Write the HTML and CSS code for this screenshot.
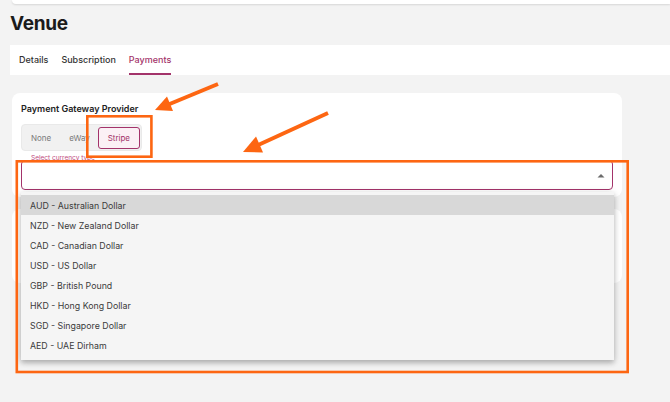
FILE: index.html
```html
<!DOCTYPE html>
<html>
<head>
<meta charset="utf-8">
<link rel="stylesheet" href="styles.css">
</head>
<body>
<div class="page">
  <div class="topbar"></div>
  <h1 class="title">Venue</h1>
  <nav class="tabs">
    <span class="tab">Details</span>
    <span class="tab">Subscription</span>
    <span class="tab active">Payments</span>
  </nav>
  <div class="content">
    <section class="card">
      <h2 class="card-title">Payment Gateway Provider</h2>
      <div class="segmented">
        <span class="seg seg-none">None</span>
        <span class="seg seg-eway">eWay</span>
        <span class="seg seg-active">Stripe</span>
      </div>
      <div class="select-wrap">
        <span class="float-label">Select currency type</span>
        <div class="select">
          <svg class="caret" width="8" height="5" viewBox="0 0 8 5"><path d="M0.5 4.5 L4 1 L7.5 4.5 Z" fill="#6b6b6b"/></svg>
        </div>
        <ul class="menu">
          <li class="item hl">AUD - Australian Dollar</li>
          <li class="item">NZD - New Zealand Dollar</li>
          <li class="item">CAD - Canadian Dollar</li>
          <li class="item">USD - US Dollar</li>
          <li class="item">GBP - British Pound</li>
          <li class="item">HKD - Hong Kong Dollar</li>
          <li class="item">SGD - Singapore Dollar</li>
          <li class="item">AED - UAE Dirham</li>
        </ul>
      </div>
    </section>
    <section class="card card2"></section>
  </div>
  <svg class="annot" width="670" height="402" viewBox="0 0 670 402">
    <rect x="87.3" y="116.3" width="64.1" height="40.4" fill="none" stroke="#fd6612" stroke-width="2.6"/>
    <rect x="16.8" y="161.3" width="610.9" height="210.7" fill="none" stroke="#fd6612" stroke-width="2.6"/>
    <line x1="218" y1="84" x2="166" y2="105.5" stroke="#fd6612" stroke-width="4" stroke-linecap="butt"/>
    <polygon points="155,110 173,111 167,96.5" fill="#fd6612"/>
    <line x1="328" y1="113" x2="256" y2="146" stroke="#fd6612" stroke-width="4" stroke-linecap="butt"/>
    <polygon points="243,152 263,152.5 256,136.5" fill="#fd6612"/>
  </svg>
</div>
</body>
</html>
```
FILE: styles.css
```css
* { box-sizing: border-box; }
html, body { margin: 0; padding: 0; }
body {
  background: #f3f3f3;
  font-family: Inter, "Noto Sans", sans-serif;
  color: #222;
  width: 670px;
  height: 402px;
  overflow: hidden;
}
.page { position: relative; width: 670px; height: 402px; }
.topbar {
  height: 4px;
  margin-left: 12px;
  background: #fff;
  border-bottom-left-radius: 6px;
  box-shadow: 0 1px 2px rgba(0,0,0,0.12);
}
.title {
  margin: 8px 0 9px 10px;
  font-size: 19px;
  line-height: 24px;
  font-weight: 700;
  color: #1b1b1b;
  letter-spacing: -0.3px;
}
.tabs {
  margin-left: 10px;
  height: 30px;
  background: #fff;
  display: flex;
  gap: 13px;
  padding-left: 9px;
}
.tab {
  display: flex;
  align-items: center;
  height: 30px;
  font-size: 9px;
  font-weight: 500;
  color: #333;
  border-bottom: 2px solid transparent;
}
.tab.active { color: #a3336a; border-bottom-color: #a3336a; }
.content { padding: 18px 48px 0 12px; }
.card {
  background: #fff;
  border-radius: 8px;
  padding: 10px 9px 7px 9px;
}
.card-title {
  margin: 0;
  font-size: 9px;
  line-height: 12px;
  font-weight: 600;
  color: #222;
}
.segmented {
  margin-top: 9px;
  display: inline-flex;
  align-items: center;
  height: 27px;
  padding: 0 1px;
  background: #f1f1f1;
  border: 1px solid #e9e9e9;
  border-radius: 4px;
}
.seg { font-size: 8px; color: #7a7a7a; }
.seg-none { padding: 0 8px; }
.seg-eway { padding: 0 8px 0 10px; }
.seg-active {
  width: 42px;
  height: 22px;
  display: flex;
  align-items: center;
  justify-content: center;
  color: #a3336a;
  background: #fbf0f5;
  border: 1px solid #a3336a;
  border-radius: 3px;
}
.select-wrap { position: relative; margin-top: 9px; }
.float-label {
  position: absolute;
  left: 8px;
  top: -5px;
  font-size: 6.5px;
  line-height: 7px;
  color: #c04a80;
  background: #fff;
  padding: 0 2px;
}
.select {
  height: 30px;
  border: 1px solid #a3336a;
  border-radius: 4px;
  display: flex;
  align-items: center;
  justify-content: flex-end;
  padding-right: 7px;
}
.caret { display: block; }
.menu {
  position: absolute;
  left: 0;
  right: -1px;
  top: 32px;
  margin: 0;
  padding: 3px 0 5px;
  list-style: none;
  background: #f5f5f5;
  box-shadow: 0 3px 5px rgba(0,0,0,0.22), 0 1px 8px rgba(0,0,0,0.12);
  z-index: 2;
}
.item {
  height: 20px;
  display: flex;
  align-items: center;
  padding-left: 9px;
  font-size: 8.8px;
  color: #3b3b3b;
}
.item.hl { background: #d8d8d8; }
.card2 { margin-top: 12px; height: 74px; padding: 0; }
.annot { position: absolute; left: 0; top: 0; z-index: 5; pointer-events: none; }
```
